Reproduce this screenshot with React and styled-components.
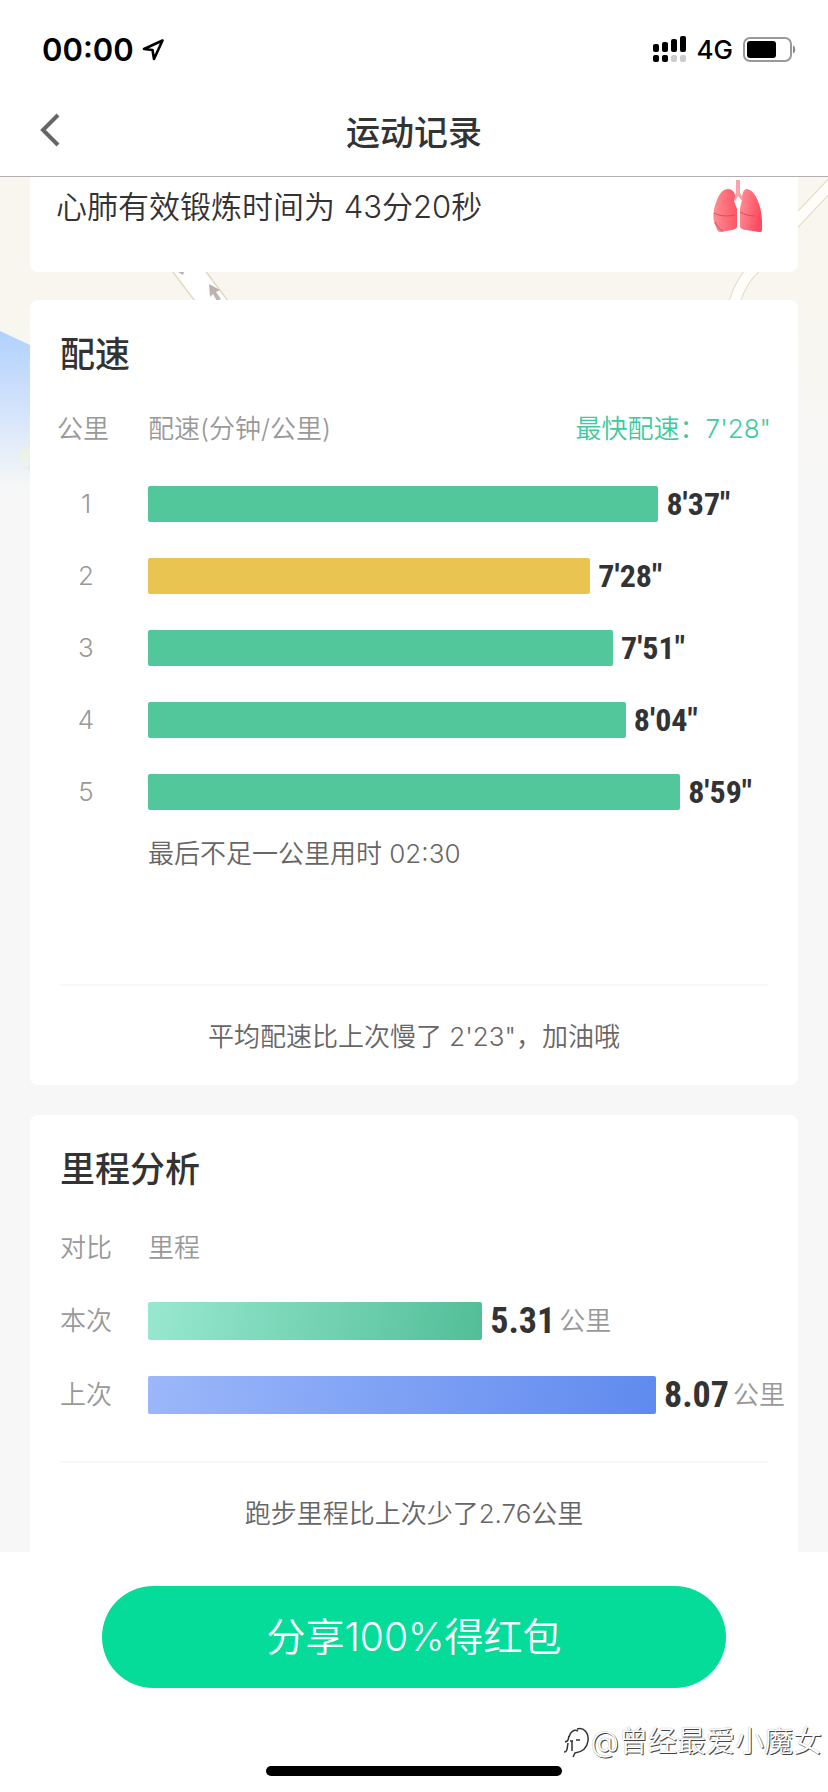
import React from "react";
import styled, { createGlobalStyle } from "styled-components";

const splits = [
  { km: 1, seconds: 517, label: "8'37\"" },
  { km: 2, seconds: 448, label: "7'28\"", best: true },
  { km: 3, seconds: 471, label: "7'51\"" },
  { km: 4, seconds: 484, label: "8'04\"" },
  { km: 5, seconds: 539, label: "8'59\"" },
];

const distances = [
  { name: "本次", km: 5.31, from: "#98e8cf", to: "#52be98" },
  { name: "上次", km: 8.07, from: "#9cb7fa", to: "#5f8aee" },
];

// full width of a bar track
const MAX_SECONDS = 628;
const MAX_KM = 9.85;

const percent = (value, max) => `${(value / max) * 100}%`;

export default function App() {
  return (
    <Page>
      <GlobalStyle />
      <Header>
        <StatusBar>
          <Clock>
            00:00
            <LocationIcon />
          </Clock>
          <Signals>
            <SignalIcon />
            <span>4G</span>
            <BatteryIcon />
          </Signals>
        </StatusBar>
        <NavBar>
          <BackButton type="button" aria-label="返回">
            <svg width="20" height="34" viewBox="0 0 20 34" fill="none">
              <path d="M18 2 3 17 18 32" stroke="#666" strokeWidth="4" />
            </svg>
          </BackButton>
          <NavTitle>运动记录</NavTitle>
        </NavBar>
      </Header>

      <Content>
        <MapBackground />
        <CardioCard>
          <span>心肺有效锻炼时间为 43分20秒</span>
          <LungsIcon />
        </CardioCard>

        <Card>
          <CardTitle>配速</CardTitle>
          <PaceHead>
            <span>公里</span>
            <span>配速(分钟/公里)</span>
            <Fastest>最快配速：7'28"</Fastest>
          </PaceHead>
          <PaceList>
            {splits.map((split) => (
              <Row key={split.km}>
                <RowName>{split.km}</RowName>
                <Track>
                  <PaceBar
                    $best={split.best}
                    style={{ width: percent(split.seconds, MAX_SECONDS) }}
                  />
                  <PaceValue>{split.label}</PaceValue>
                </Track>
              </Row>
            ))}
          </PaceList>
          <Remainder>最后不足一公里用时 02:30</Remainder>
          <Summary>平均配速比上次慢了 2'23"，加油哦</Summary>
        </Card>

        <Card $last>
          <CardTitle>里程分析</CardTitle>
          <DistanceHead>
            <span>对比</span>
            <span>里程</span>
          </DistanceHead>
          <DistanceList>
            {distances.map((item) => (
              <Row key={item.name}>
                <RowName>{item.name}</RowName>
                <Track>
                  <DistanceBar
                    $from={item.from}
                    $to={item.to}
                    style={{ width: percent(item.km, MAX_KM) }}
                  />
                  <DistanceValue>{item.km}</DistanceValue>
                  <Unit>公里</Unit>
                </Track>
              </Row>
            ))}
          </DistanceList>
          <Summary>跑步里程比上次少了2.76公里</Summary>
        </Card>
      </Content>

      <Footer>
        <ShareButton type="button">分享100%得红包</ShareButton>
        <HomeIndicator />
        <Watermark>
          <WatermarkIcon />
          @曾经最爱小魔女
        </Watermark>
      </Footer>
    </Page>
  );
}

function LocationIcon() {
  return (
    <svg width="22" height="22" viewBox="0 0 22 22" fill="none">
      <path
        d="M20.500 1.500 2 10l8.500 1L12 20Z"
        stroke="#000"
        strokeWidth="2.600"
        strokeLinejoin="round"
      />
    </svg>
  );
}

function SignalIcon() {
  return (
    <svg width="34" height="28" viewBox="0 0 34 28">
      <rect x="0" y="8" width="6" height="8" rx="2" />
      <rect x="9" y="6" width="6" height="10" rx="2" />
      <rect x="18" y="3" width="6" height="13" rx="2" />
      <rect x="27" y="0" width="6" height="16" rx="2" />
      <rect x="0" y="19" width="6" height="7" rx="2" />
      <rect x="9" y="19" width="6" height="7" rx="2" />
      <rect x="18" y="19" width="6" height="7" rx="2" fill="#ccc" />
      <rect x="27" y="19" width="6" height="7" rx="2" fill="#ccc" />
    </svg>
  );
}

function BatteryIcon() {
  return (
    <svg width="54" height="26" viewBox="0 0 54 26">
      <rect x="1" y="1" width="47" height="23" rx="6" fill="none" stroke="#999" strokeWidth="2" />
      <rect x="4" y="4" width="29" height="17" rx="3" />
      <path d="M50 8.500c3 1 3 7 0 8Z" fill="#888" />
    </svg>
  );
}

function LungsIcon() {
  return (
    <svg width="52" height="54" viewBox="0 0 52 54">
      <defs>
        <linearGradient id="lungLeft" x1="0" y1="0" x2="1" y2="0">
          <stop offset="0" stopColor="#ff8d93" />
          <stop offset="1" stopColor="#fb5566" />
        </linearGradient>
        <linearGradient id="lungRight" x1="0" y1="0" x2="1" y2="0.300">
          <stop offset="0" stopColor="#ff9398" />
          <stop offset="1" stopColor="#fc4a60" />
        </linearGradient>
      </defs>
      <path
        d="M24 0h4v13l5 7-2 2-5-6-3 5-2-2 3-6Z"
        fill="#f9a3ab"
      />
      <path
        d="M16 9c4 0 7 3 7 7l-1 5 3 8v17c0 3-2 3-5 4l-11 2c-3 0-4-2-5-5C1 41 1 36 2 30 4 21 8 9 16 9Z"
        fill="url(#lungLeft)"
      />
      <path
        d="M35 9c9 1 15 20 15 31v10c0 2-1 2-3 2l-13-2c-4-1-6-1-6-4V28l2-8c0-6 1-11 5-11Z"
        fill="url(#lungRight)"
      />
      <path
        d="M2 33c7 4 15 3 21 2M28 32c5 3 10 4 15 4M3 42c2 4 4 7 8 9"
        fill="none"
        stroke="#d94b60"
        strokeWidth="1"
      />
    </svg>
  );
}

function MapBackground() {
  return (
    <MapCanvas viewBox="0 0 828 312" preserveAspectRatio="none" aria-hidden="true">
      <defs>
        <linearGradient id="mapFade" x1="0" y1="0" x2="0" y2="1">
          <stop offset="0.350" stopColor="#f7f7f7" stopOpacity="0" />
          <stop offset="1" stopColor="#f7f7f7" />
        </linearGradient>
      </defs>
      <rect width="828" height="312" fill="#f8f6ee" />
      <path d="M0 154l30 14v144H0Z" fill="#9cc6ff" />
      <path d="M30 268c-10 2-14 12-6 20l6 2Z" fill="#a9e08c" />
      <path d="M30 287l-6 4 6 4Z" fill="#6f8fa8" />
      <path d="M152 45 228 146" stroke="#e2dabc" strokeWidth="28" />
      <path d="M152 45 228 146" stroke="#fff" strokeWidth="25" />
      <path d="M178 95h6l-1 3Z" fill="#bfb0b0" />
      <path d="M209 107l11 6-4 2 5 7-4 2-4-7-3 3Z" fill="#bfb0b0" />
      <path d="M733 130c5-18 12-30 21-38l44-50 38-40" fill="none" stroke="#dedbc6" strokeWidth="12" />
      <path d="M733 130c5-18 12-30 21-38l44-50 38-40" fill="none" stroke="#fffefa" strokeWidth="10" />
      <rect width="828" height="312" fill="url(#mapFade)" />
    </MapCanvas>
  );
}

function WatermarkIcon() {
  return (
    <svg width="28" height="32" viewBox="0 0 28 32" fill="none" stroke="#333" strokeWidth="1.500">
      <path d="M1 26c3 0 3-2 4-9M2 16c3-1 3-1 4-6M14 3c7-2 12 4 11 12-1 7-6 11-13 12l-2 4" />
      <path d="M6 11c1-5 5-8 9-6M7 15h3M13 14h4M9 15v10" />
    </svg>
  );
}

const GlobalStyle = createGlobalStyle`
  * {
    box-sizing: border-box;
  }
  body {
    margin: 0;
    background: #f7f7f7;
    color: #333;
    font-family: Inter, "Noto Sans CJK SC", sans-serif;
  }
  button {
    padding: 0;
    border: 0;
    font-family: inherit;
    cursor: pointer;
  }
  svg {
    display: block;
    flex: none;
  }
`;

const Page = styled.div`
  display: flex;
  flex-direction: column;
  min-height: 100vh;
`;

const Header = styled.header`
  background: #fff;
  border-bottom: 1px solid #b0b0b0;
`;

const StatusBar = styled.div`
  display: flex;
  align-items: center;
  justify-content: space-between;
  height: 88px;
  padding: 11px 31px 0 42px;
  color: #000;
`;

const Clock = styled.div`
  display: flex;
  align-items: center;
  gap: 8px;
  font-size: 31px;
  font-weight: 600;
`;

const Signals = styled.div`
  display: flex;
  align-items: center;
  gap: 10px;
  font-size: 26px;
  font-weight: 500;
`;

const NavBar = styled.nav`
  display: grid;
  grid-template-columns: 80px 1fr 80px;
  align-items: center;
  height: 88px;
  padding-bottom: 4px;
`;

const BackButton = styled.button`
  display: flex;
  align-items: center;
  height: 80px;
  padding-left: 40px;
  background: none;
`;

const NavTitle = styled.h1`
  margin: 0;
  font-size: 34px;
  font-weight: 500;
  text-align: center;
`;

const Content = styled.main`
  position: relative;
  display: flex;
  flex: 1;
  flex-direction: column;
  padding: 0 30px;
`;

const MapCanvas = styled.svg`
  position: absolute;
  top: 0;
  left: 0;
  z-index: -1;
  width: 100%;
  height: 312px;
`;

const CardioCard = styled.section`
  display: flex;
  align-items: flex-start;
  justify-content: space-between;
  height: 95px;
  margin-bottom: 28px;
  padding: 3px 34px 0 26px;
  border-radius: 0 0 8px 8px;
  background: #fff;
  font-size: 31px;
  font-weight: 350;
  line-height: 54px;
`;

const Card = styled.section`
  flex: ${({ $last }) => ($last ? "1" : "none")};
  margin-bottom: ${({ $last }) => ($last ? "0" : "30px")};
  padding: 24px 30px ${({ $last }) => ($last ? "0" : "28px")};
  border-radius: ${({ $last }) => ($last ? "8px 8px 0 0" : "8px")};
  background: #fff;
`;

const CardTitle = styled.h2`
  margin: 0;
  font-size: 35px;
  font-weight: 500;
  line-height: 60px;
`;

const TableHead = styled.div`
  display: grid;
  align-items: center;
  color: #999;
  font-size: 26px;
  font-weight: 350;
  line-height: 40px;
`;

const PaceHead = styled(TableHead)`
  grid-template-columns: 91px 1fr auto;
  margin: 25px -3px 0;
`;

const DistanceHead = styled(TableHead)`
  grid-template-columns: 88px 1fr;
  margin-top: 29px;
`;

const Fastest = styled.span`
  color: #3ccb9d;
`;

const PaceList = styled.div`
  display: grid;
  gap: 36px;
  margin-top: 37px;
`;

const DistanceList = styled.div`
  display: grid;
  gap: 36px;
  margin-top: 34px;
`;

const Row = styled.div`
  display: grid;
  grid-template-columns: 52px minmax(0, 1fr);
  column-gap: 36px;
  align-items: center;
`;

const RowName = styled.span`
  color: #999;
  font-size: 26px;
  font-weight: 350;
  line-height: 36px;
  text-align: center;
`;

const Track = styled.div`
  display: flex;
  align-items: center;
  white-space: nowrap;
`;

const Bar = styled.div`
  flex: none;
  border-radius: 2px;
`;

const PaceBar = styled(Bar)`
  height: 36px;
  background: ${({ $best }) => ($best ? "#e9c451" : "#52c79c")};
`;

const DistanceBar = styled(Bar)`
  height: 38px;
  background: linear-gradient(100deg, ${({ $from }) => $from}, ${({ $to }) => $to});
`;

const Value = styled.strong`
  margin-left: 8px;
  color: #333;
  font-family: "Roboto Condensed", "Liberation Sans Narrow", sans-serif;
  font-weight: 700;
  line-height: 36px;
`;

const PaceValue = styled(Value)`
  font-size: 32px;
`;

const DistanceValue = styled(Value)`
  font-size: 36px;
`;

const Unit = styled.span`
  margin-left: 4px;
  color: #999;
  font-size: 26px;
  font-weight: 350;
  line-height: 36px;
`;

const Remainder = styled.p`
  margin: 24px 0 0 88px;
  color: #666;
  font-size: 26px;
  font-weight: 350;
  line-height: 40px;
`;

const Summary = styled.p`
  margin: 47px 0 0;
  padding: 31px 0 0;
  border-top: 2px solid #f7f7f7;
  color: #666;
  font-size: 26px;
  font-weight: 350;
  line-height: 40px;
  text-align: center;

  ${Remainder} + & {
    margin-top: 110px;
  }
`;

const Footer = styled.footer`
  position: relative;
  display: flex;
  flex-direction: column;
  align-items: center;
  height: 240px;
  padding: 34px 102px 16px;
  background: #fff;
`;

const ShareButton = styled.button`
  width: 100%;
  height: 102px;
  padding-bottom: 6px;
  border-radius: 51px;
  background: #05dc9a;
  color: #fff;
  font-size: 39px;
  font-weight: 350;
`;

const HomeIndicator = styled.div`
  width: 296px;
  height: 10px;
  margin-top: auto;
  border-radius: 5px;
  background: #000;
`;

const Watermark = styled.div`
  position: absolute;
  right: 6px;
  bottom: 30px;
  display: flex;
  align-items: center;
  color: #fff;
  font-size: 29px;
  font-weight: 350;
  line-height: 40px;
  text-shadow: 1px 1px 0 #444, 0 0 1px #999;
`;
